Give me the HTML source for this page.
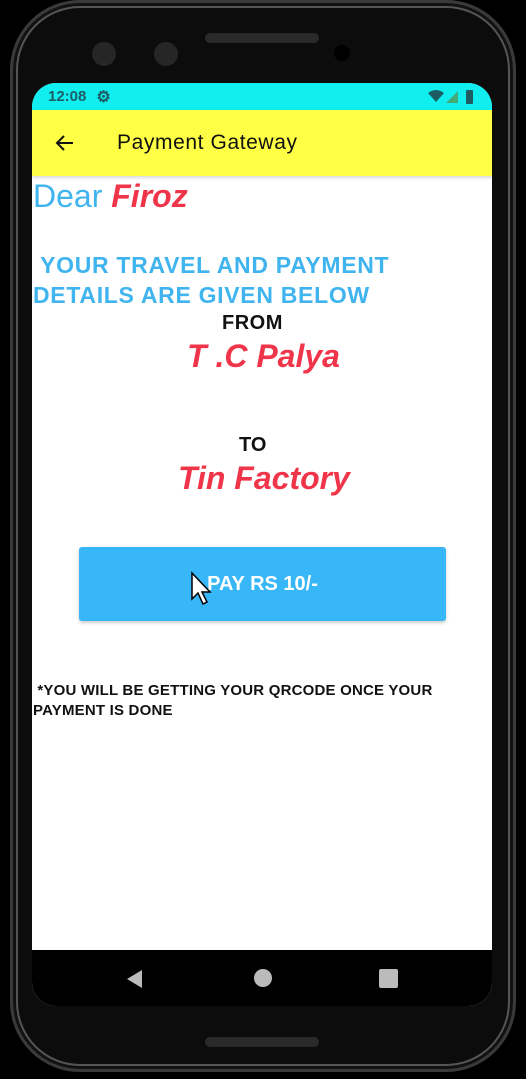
<!DOCTYPE html>
<html><head><meta charset="utf-8"><style>
*{margin:0;padding:0;box-sizing:border-box}
body{width:526px;height:1079px;background:#000;position:relative;overflow:hidden;font-family:"Liberation Sans",sans-serif}
.phone{position:absolute;left:10px;top:0;width:506px;height:1072px;border-radius:70px;background:#0c0c0c;border:3px solid #3a3a3a;box-shadow:inset 0 0 0 3px #111,inset 0 0 0 5px #555}
.screen{position:absolute;left:32px;top:83px;width:460px;height:923px;border-radius:24px;overflow:hidden;background:#fff}
.status{height:27px;background:#10eef0;color:#1d5c63;font-size:15px;font-weight:bold;display:flex;align-items:center;padding-left:16px}
.toolbar{height:66px;background:#ffff46;display:flex;align-items:center;box-shadow:0 2px 3px rgba(0,0,0,.15)}
.toolbar .t{font-size:21px;color:#111;margin-left:42px;letter-spacing:0.6px}
.abs{position:absolute;white-space:nowrap}
.nav{position:absolute;left:0;top:867px;width:460px;height:56px;background:#000}
</style></head><body>
<div class="phone"></div>
<div class="abs" style="left:205px;top:33px;width:114px;height:10px;border-radius:5px;background:#2a2a2a"></div>
<div class="abs" style="left:92px;top:42px;width:24px;height:24px;border-radius:50%;background:#262626"></div>
<div class="abs" style="left:154px;top:42px;width:24px;height:24px;border-radius:50%;background:#262626"></div>
<div class="abs" style="left:334px;top:45px;width:16px;height:16px;border-radius:50%;background:#000"></div>
<div class="abs" style="left:205px;top:1037px;width:114px;height:10px;border-radius:5px;background:#2a2a2a"></div>
<div class="screen">
<div class="status">12:08 <span style="margin-left:10px;font-size:16px">⚙</span>
<svg style="position:absolute;right:16px;top:6px" width="48" height="16"><path d="M0 4 Q8 -2 16 4 L8 13Z" fill="#1d5c63"/><path d="M30 2 L30 14 L18 14Z" fill="#4a7"/><rect x="38" y="1" width="7" height="14" rx="1" fill="#1d5c63"/></svg></div>
<div class="toolbar"><svg style="margin-left:23px" width="20" height="20" viewBox="0 0 20 20"><path d="M18 10H3M9 3L2 10l7 7" stroke="#111" stroke-width="2" fill="none"/></svg><span class="t">Payment Gateway</span></div>
<div class="abs" style="left:1px;top:95px;font-size:32px;color:#40b4ef">Dear <b style="color:#f0354a;font-style:italic">Firoz</b></div>
<div class="abs" style="left:1px;top:167px;font-size:23px;font-weight:bold;color:#40b4ef;line-height:30px;letter-spacing:0.7px">&nbsp;YOUR TRAVEL AND PAYMENT<br>DETAILS ARE GIVEN BELOW</div>
<div class="abs" style="left:190px;top:229px;font-size:20px;font-weight:bold;color:#111;letter-spacing:0.5px">FROM</div>
<div class="abs" style="left:155px;top:255px;font-size:32px;font-weight:bold;font-style:italic;color:#f0354a">T .C Palya</div>
<div class="abs" style="left:207px;top:351px;font-size:20px;font-weight:bold;color:#111">TO</div>
<div class="abs" style="left:146px;top:377px;font-size:32px;font-weight:bold;font-style:italic;color:#f0354a">Tin Factory</div>
<div class="abs" style="left:47px;top:464px;width:367px;height:74px;background:#38b7f8;border-radius:3px;box-shadow:0 2px 3px rgba(0,0,0,.2);color:#fff;font-weight:bold;font-size:20px;text-align:center;line-height:74px">PAY RS 10/-</div>
<svg class="abs" style="left:158px;top:488px" width="24" height="36"><path d="M2 2 L2 28 L8 22 L13 33 L17 31 L12 21 L20 21Z" fill="#fff" stroke="#000" stroke-width="1.5"/></svg>
<div class="abs" style="left:1px;top:598px;font-size:15px;font-weight:bold;color:#111;line-height:20px;letter-spacing:0.2px">&nbsp;*YOU WILL BE GETTING YOUR QRCODE ONCE YOUR<br>PAYMENT IS DONE</div>
<div class="nav">
<svg class="abs" style="left:92px;top:18px" width="20" height="22"><path d="M18 2L3 11l15 9Z" fill="#bbb"/></svg>
<div class="abs" style="left:222px;top:19px;width:18px;height:18px;border-radius:50%;background:#bbb"></div>
<div class="abs" style="left:347px;top:19px;width:19px;height:19px;border-radius:2px;background:#bbb"></div>
</div>
</div>
</body></html>
